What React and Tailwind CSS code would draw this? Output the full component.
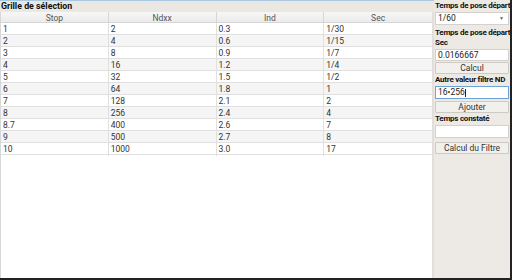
import React from 'react';

const rows = [
  ['1', '2', '0.3', '1/30'],
  ['2', '4', '0.6', '1/15'],
  ['3', '8', '0.9', '1/7'],
  ['4', '16', '1.2', '1/4'],
  ['5', '32', '1.5', '1/2'],
  ['6', '64', '1.8', '1'],
  ['7', '128', '2.1', '2'],
  ['8', '256', '2.4', '4'],
  ['8.7', '400', '2.6', '7'],
  ['9', '500', '2.7', '8'],
  ['10', '1000', '3.0', '17'],
];

const headers = ['Stop', 'Ndxx', 'Ind', 'Sec'];

const Label = ({ children, className = '' }) => (
  <div className={`font-bold text-[8px] tracking-[-0.25px] leading-[10px] h-[10px] text-[#111] whitespace-nowrap ${className}`}>
    {children}
  </div>
);

const Button = ({ children, className = '' }) => (
  <div
    className={`h-[12px] border border-[#cdc9c4] bg-[#f2f0ed] rounded-[1px] flex items-center justify-center text-[8.5px] text-[#333] ${className}`}
  >
    {children}
  </div>
);

const Input = ({ value, focused, className = '' }) => (
  <div
    className={`bg-white flex items-center px-[2px] text-[8.5px] text-[#222] ${
      focused ? 'border border-[#6fa3d8]' : 'border border-[#d4d0cb]'
    } ${className}`}
  >
    {value}
    {focused && <span className="w-px h-[8px] bg-[#222]" />}
  </div>
);

export default function App() {
  return (
    <div
      className="w-[512px] h-[280px] flex bg-[#edeae6] border-r-2 border-b-2 border-[#222] overflow-hidden"
      style={{ fontFamily: 'Roboto, "Liberation Sans", sans-serif' }}
    >
      {/* Grid panel */}
      <div className="w-[434px] shrink-0 flex flex-col">
        <div className="h-[12px] border-t border-[#a9c8e2] bg-[#ebe8e4] flex items-center px-px">
          <span className="font-bold text-[8.8px] text-[#111]">Grille de sélection</span>
        </div>
        <div className="flex-1 flex">
          <div className="w-[432px] bg-white border-l border-[#d8d8d8]">
            <div className="grid grid-cols-4 h-[11px] bg-gradient-to-b from-[#f7f7f7] to-[#ebebeb] border-b border-[#d6d6d6]">
              {headers.map((h, i) => (
                <div
                  key={h}
                  className={`flex items-center justify-center text-[8.5px] text-[#555] ${i < 3 ? 'border-r border-[#d6d6d6]' : ''}`}
                >
                  {h}
                </div>
              ))}
            </div>
            {rows.map((r, ri) => (
              <div
                key={ri}
                className={`grid grid-cols-4 h-[12px] border-b border-[#e0e0e0] ${ri % 2 ? 'bg-[#f5f5f5]' : 'bg-white'}`}
              >
                {r.map((c, ci) => (
                  <div
                    key={ci}
                    className={`flex items-center px-[2px] text-[8.5px] text-[#333] ${ci < 3 ? 'border-r border-[#e0e0e0]' : ''}`}
                  >
                    {c}
                  </div>
                ))}
              </div>
            ))}
          </div>
          <div className="w-[2px] bg-[#e2dedb]" />
        </div>
      </div>

      {/* Side panel */}
      <div className="flex-1 min-w-0 flex flex-col pl-px pr-px pt-px">
        <Label>Temps de pose départ</Label>
        <div className="mt-[1px] h-[13px] bg-white border border-[#d4d0cb] flex items-center justify-between px-[2px] text-[8.5px] text-[#222]">
          <span>1/60</span>
          <span className="text-[5px] text-[#666] pr-[2px]">▼</span>
        </div>
        <Label className="mt-[3px]">Temps de pose départ</Label>
        <Label>Sec</Label>
        <Input value="0.0166667" className="mt-[1px] h-[12px]" />
        <Button className="mt-[1px]">Calcul</Button>
        <Label className="mt-[1px]">Autre valeur filtre ND</Label>
        <Input value="16•256" focused className="mt-[1px] h-[13px]" />
        <Button className="mt-[2px]">Ajouter</Button>
        <Label className="mt-[1px]">Temps constaté</Label>
        <Input value="" className="mt-[1px] h-[13px]" />
        <Button className="mt-[4px]">Calcul du Filtre</Button>
      </div>
    </div>
  );
}
